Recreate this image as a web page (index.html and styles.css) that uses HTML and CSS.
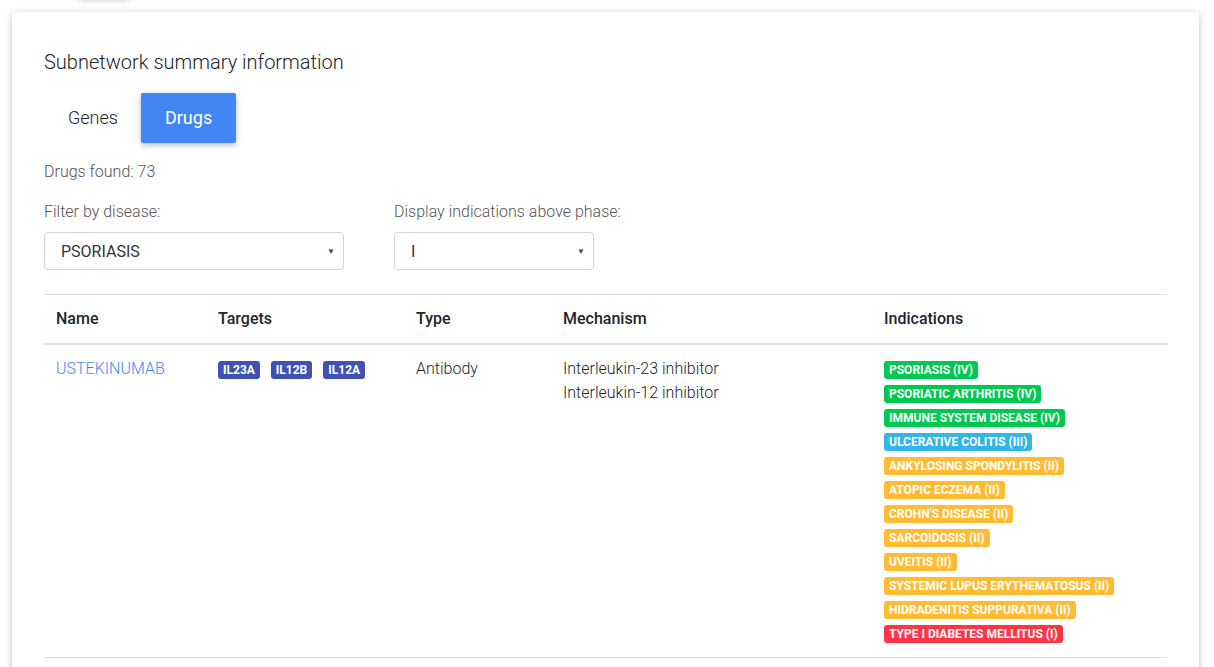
FILE: index.html
```html
<!DOCTYPE html>
<html>
<head>
<meta charset="utf-8">
<link rel="stylesheet" href="styles.css">
</head>
<body>
<div class="ghost"></div>
<div class="card">
  <h4 class="title">Subnetwork summary information</h4>
  <ul class="tabs">
    <li class="tab">Genes</li>
    <li class="tab active">Drugs</li>
  </ul>
  <p class="found">Drugs found: 73</p>
  <div class="filters">
    <div class="filter f1">
      <label class="flabel">Filter by disease:</label>
      <div class="select"><span>PSORIASIS</span><span class="caret">&#9660;</span></div>
    </div>
    <div class="filter f2">
      <label class="flabel">Display indications above phase:</label>
      <div class="select"><span>I</span><span class="caret">&#9660;</span></div>
    </div>
  </div>
  <table class="drugs">
    <thead>
      <tr>
        <th class="c-name">Name</th>
        <th class="c-targets">Targets</th>
        <th class="c-type">Type</th>
        <th class="c-mech">Mechanism</th>
        <th class="c-ind">Indications</th>
      </tr>
    </thead>
    <tbody>
      <tr>
        <td><a class="drug" href="#">USTEKINUMAB</a></td>
        <td><span class="badge indigo">IL23A</span><span class="badge indigo">IL12B</span><span class="badge indigo">IL12A</span></td>
        <td>Antibody</td>
        <td>Interleukin-23 inhibitor<br>Interleukin-12 inhibitor</td>
        <td class="ind">
          <span class="badge green">PSORIASIS (IV)</span>
          <span class="badge green">PSORIATIC ARTHRITIS (IV)</span>
          <span class="badge green">IMMUNE SYSTEM DISEASE (IV)</span>
          <span class="badge blue">ULCERATIVE COLITIS (III)</span>
          <span class="badge orange">ANKYLOSING SPONDYLITIS (II)</span>
          <span class="badge orange">ATOPIC ECZEMA (II)</span>
          <span class="badge orange">CROHN'S DISEASE (II)</span>
          <span class="badge orange">SARCOIDOSIS (II)</span>
          <span class="badge orange">UVEITIS (II)</span>
          <span class="badge orange">SYSTEMIC LUPUS ERYTHEMATOSUS (II)</span>
          <span class="badge orange">HIDRADENITIS SUPPURATIVA (II)</span>
          <span class="badge red">TYPE I DIABETES MELLITUS (I)</span>
        </td>
      </tr>
    </tbody>
  </table>
</div>
</body>
</html>
```
FILE: styles.css
```css
html, body {
  margin: 0;
  padding: 0;
  background: #fff;
}
body {
  font-family: Roboto, "Noto Sans", sans-serif;
  font-weight: 300;
  color: #212529;
  padding: 12px 15px 12px 12px;
  position: relative;
  overflow: hidden;
  height: 667px;
  box-sizing: border-box;
}
.ghost {
  position: absolute;
  top: -40px;
  left: 78px;
  width: 52px;
  height: 39px;
  border-radius: 2px;
  box-shadow: 0 2px 5px 0 rgba(0,0,0,.10), 0 2px 10px 0 rgba(0,0,0,.08);
  background: #fff;
}
.card {
  background: #fff;
  border-radius: 3px;
  box-shadow: 0 2px 5px 0 rgba(0,0,0,.16), 0 2px 10px 0 rgba(0,0,0,.12);
  padding: 38px 32px 40px;
  min-height: 800px;
}
.title {
  margin: 0;
  font-size: 20px;
  font-weight: 300;
  line-height: 24px;
  color: #212529;
}
.tabs {
  list-style: none;
  margin: 19px 0 0;
  padding: 0;
  display: flex;
}
.tab {
  height: 50px;
  line-height: 50px;
  padding: 0 24px;
  font-size: 18px;
  font-weight: 300;
  color: #212529;
  border-radius: 2px;
}
.tab:first-child { padding-right: 23px; }
.tab.active {
  background: #4285f4;
  color: #fff;
  font-weight: 400;
  box-shadow: 0 2px 5px 0 rgba(0,0,0,.16), 0 2px 10px 0 rgba(0,0,0,.12);
}
.found {
  margin: 18px 0 0;
  font-size: 16px;
  line-height: 22px;
  color: #555;
}
.filters {
  display: flex;
  gap: 50px;
  margin-top: 18px;
}
.filter {
  display: flex;
  flex-direction: column;
}
.f1 { width: 300px; }
.f2 { width: 200px; }
.flabel {
  font-size: 16px;
  line-height: 22px;
  color: #555;
  white-space: nowrap;
}
.select {
  margin-top: 9px;
  height: 38px;
  box-sizing: border-box;
  border: 1px solid #ced4da;
  border-radius: 4px;
  display: flex;
  align-items: center;
  justify-content: space-between;
  padding: 0 8px 0 16px;
  font-size: 16px;
  font-weight: 400;
  color: #333;
}
.caret {
  font-size: 8px;
  color: #444;
}
.drugs {
  margin-top: 24px;
  width: 100%;
  border-collapse: collapse;
  font-size: 16px;
}
.drugs th {
  text-align: left;
  font-weight: 500;
  padding: 12px;
  line-height: 24px;
  border-top: 1px solid #dee2e6;
  border-bottom: 2px solid #dee2e6;
  color: #212529;
}
.drugs td {
  vertical-align: top;
  padding: 12px;
  line-height: 24px;
  border-bottom: 1px solid #dee2e6;
}
.c-name { width: 138px; }
.c-targets { width: 174px; }
.c-type { width: 123px; }
.c-mech { width: 297px; }
.drug {
  color: #4285f4;
  text-decoration: none;
  font-weight: 300;
}
.badge {
  display: inline-block;
  font-size: 12px;
  font-weight: 700;
  line-height: 18px;
  height: 18px;
  padding: 0 5px;
  border-radius: 3px;
  color: #fff;
  vertical-align: middle;
}
.indigo { background: #3f51b5; margin-right: 11px; }
.ind .badge {
  display: block;
  width: max-content;
  margin: 4px 0 6px;
}
.ind .badge:last-child { margin-bottom: 2px; }
.green { background: #00c851; }
.blue { background: #33b5e5; }
.orange { background: #ffbb33; }
.red { background: #ff3547; }
```
